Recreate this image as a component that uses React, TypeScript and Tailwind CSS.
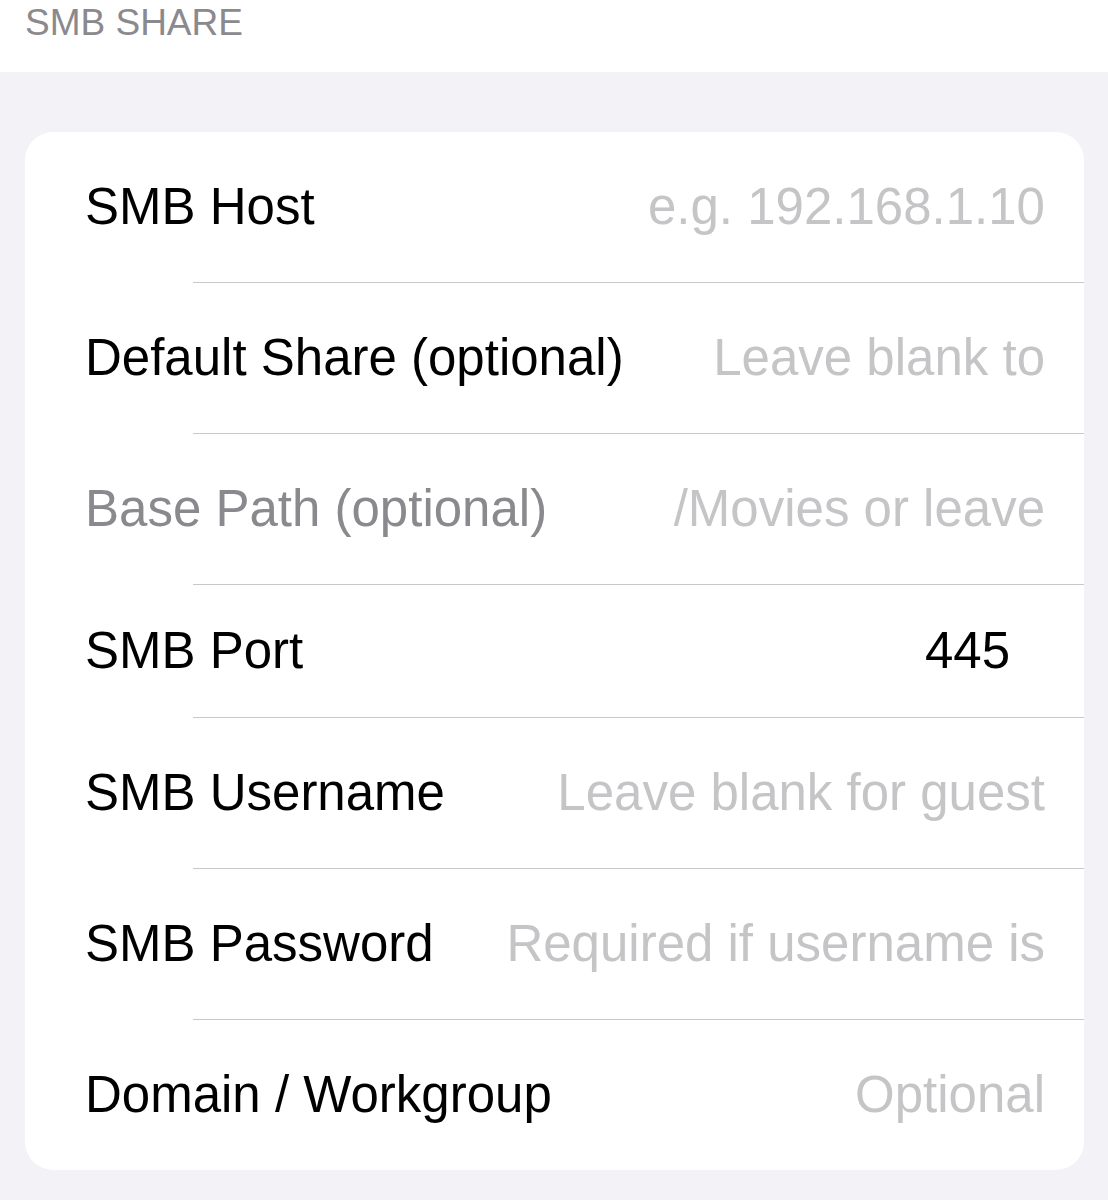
import React from 'react';

type Field = {
  label: string;
  value?: string;
  placeholder?: string;
  disabled?: boolean;
  short?: boolean;
};

const fields: Field[] = [
  { label: 'SMB Host', placeholder: 'e.g. 192.168.1.10' },
  { label: 'Default Share (optional)', placeholder: 'Leave blank to' },
  { label: 'Base Path (optional)', placeholder: '/Movies or leave', disabled: true },
  { label: 'SMB Port', value: '445', short: true },
  { label: 'SMB Username', placeholder: 'Leave blank for guest' },
  { label: 'SMB Password', placeholder: 'Required if username is' },
  { label: 'Domain / Workgroup', placeholder: 'Optional' },
];

const FormRow: React.FC<{ field: Field; last: boolean }> = ({ field, last }) => (
  <div>
    <div
      className={`flex items-center justify-between pl-[60px] ${
        field.short ? 'h-[132px] pr-[74px]' : 'h-[150px] pr-[39px]'
      }`}
    >
      <span
        className={`whitespace-nowrap text-[51px] leading-[64px] ${
          field.disabled ? 'text-[#8a8a8e]' : 'text-black'
        }`}
      >
        {field.label}
      </span>
      <span
        className={`ml-8 whitespace-nowrap text-right text-[51px] leading-[64px] ${
          field.value ? 'text-black' : 'text-[#c5c5c7]'
        }`}
      >
        {field.value ?? field.placeholder}
      </span>
    </div>
    {!last && <div className="ml-[168px] h-px bg-[#c8c8cc]" />}
  </div>
);

export default function App() {
  return (
    <div className="min-h-[1200px] bg-[#f2f2f7] font-['Liberation_Sans',Arial,sans-serif]">
      <div className="h-[72px] bg-white pl-[25px] pt-[4px]">
        <span className="text-[37px] leading-[38px] text-[#8a8a8e]">SMB SHARE</span>
      </div>
      <div className="pt-[60px] pl-[25px] pr-[24px] pb-[31px]">
        <div className="overflow-hidden rounded-[28px] bg-white">
          {fields.map((f, i) => (
            <FormRow key={f.label} field={f} last={i === fields.length - 1} />
          ))}
        </div>
      </div>
    </div>
  );
}
